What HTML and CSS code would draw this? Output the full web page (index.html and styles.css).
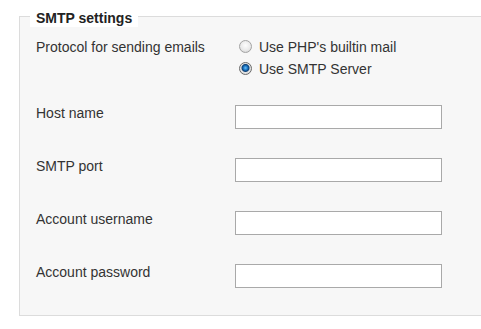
FILE: index.html
```html
<!DOCTYPE html>
<html lang="en">
<head>
    <meta charset="UTF-8">
    <meta name="viewport" content="width=device-width, initial-scale=1.0">
    <title>SMTP settings</title>
    <link rel="stylesheet" href="styles.css">
</head>
<body>
    <form class="settings-form">
        <fieldset class="settings-group">
            <legend>SMTP settings</legend>

            <div class="form-row protocol-row">
                <div class="form-label">Protocol for sending emails</div>
                <div class="radio-list">
                    <label class="radio-option">
                        <input type="radio" name="protocol" value="mail">
                        <span>Use PHP's builtin mail</span>
                    </label>
                    <label class="radio-option">
                        <input type="radio" name="protocol" value="smtp" checked>
                        <span>Use SMTP Server</span>
                    </label>
                </div>
            </div>

            <div class="form-row">
                <label class="form-label" for="hostName">Host name</label>
                <input class="text-input" type="text" id="hostName">
            </div>

            <div class="form-row">
                <label class="form-label" for="smtpPort">SMTP port</label>
                <input class="text-input" type="text" id="smtpPort">
            </div>

            <div class="form-row">
                <label class="form-label" for="accountUser">Account username</label>
                <input class="text-input" type="text" id="accountUser">
            </div>

            <div class="form-row">
                <label class="form-label" for="accountPass">Account password</label>
                <input class="text-input" type="password" id="accountPass">
            </div>
        </fieldset>
    </form>
</body>
</html>
```

FILE: styles.css
```css
* {
    box-sizing: border-box;
    font-family: "Liberation Sans", Arial, sans-serif;
}

body {
    margin: 0;
    background-color: #fff;
    color: #333;
    font-size: 14px;
}

.settings-form {
    margin: 0;
}

.settings-group {
    min-width: 0;
    margin: 6px 0 0 19px;
    padding: 9px 16px 27px 16px;
    border: 1px solid #dcdcdc;
    border-right: none;
    background-color: #f7f7f7;
}

.settings-group legend {
    margin-left: -6px;
    padding: 3px 6px 0 6px;
    line-height: 18px;
    font-weight: bold;
    color: #222;
    background-color: #fff;
}

.form-row {
    display: flex;
    align-items: flex-start;
    margin-top: 29px;
}

.protocol-row {
    margin-top: 0;
}

.protocol-row + .form-row {
    margin-top: 25px;
}

.form-label {
    width: 199px;
    flex-shrink: 0;
    line-height: 17px;
}

.protocol-row .form-label {
    line-height: 22px;
}

.radio-list {
    display: flex;
    flex-direction: column;
}

.radio-option {
    display: flex;
    align-items: center;
    height: 22px;
    cursor: pointer;
}

.radio-option input {
    appearance: none;
    -webkit-appearance: none;
    width: 13px;
    height: 13px;
    margin: -2px 7px 0 4px;
    border: 1px solid #a3a3a3;
    border-radius: 50%;
    background: radial-gradient(circle at 50% 40%, #fdfdfd 0, #e9e9e9 5px, #d6d6d6 7px);
}

.radio-option input:checked {
    border-color: #6a6a6a;
    background: radial-gradient(circle at 50% 45%, #6fc0f5 0, #1a78c8 2px, #0d3f74 3.5px, #e4e4e4 4.5px, #d8d8d8 7px);
}

.text-input {
    width: 207px;
    height: 24px;
    margin: 0;
    padding: 2px 4px;
    border: 1px solid #a9a9a9;
    background-color: #fff;
    font-size: 14px;
}
```
